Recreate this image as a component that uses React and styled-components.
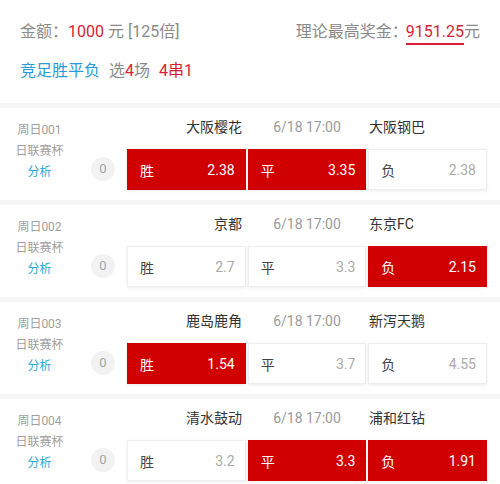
import React from "react";
import styled, { createGlobalStyle } from "styled-components";

const GlobalStyle = createGlobalStyle`
  * { box-sizing: border-box; }
  body {
    margin: 0;
    background: #fff;
    font-family: Roboto, "Noto Sans CJK SC", "Noto Sans", sans-serif;
  }
`;

const matches = [
  { no: "周日001", home: "大阪樱花", away: "大阪钢巴", odds: ["2.38", "3.35", "2.38"], picked: [0, 1] },
  { no: "周日002", home: "京都", away: "东京FC", odds: ["2.7", "3.3", "2.15"], picked: [2] },
  { no: "周日003", home: "鹿岛鹿角", away: "新泻天鹅", odds: ["1.54", "3.7", "4.55"], picked: [0] },
  { no: "周日004", home: "清水鼓动", away: "浦和红钻", odds: ["3.2", "3.3", "1.91"], picked: [1, 2] },
];

const labels = ["胜", "平", "负"];

const App = () => {
  return (
    <>
      <GlobalStyle />
      <Page>
        <Header>
          <HeaderLine>
            <span>
              金额：<Red>1000</Red> 元 [125倍]
            </span>
            <span>
              理论最高奖金：<Prize>9151.25</Prize>元
            </span>
          </HeaderLine>
          <HeaderLine>
            <span>
              <Blue>竞足胜平负</Blue>
              <Gap />选<Red>4</Red>场<Gap />
              <Red>4串1</Red>
            </span>
          </HeaderLine>
        </Header>
        {matches.map((m) => (
          <MatchRow key={m.no}>
            <Info>
              <InfoText>{m.no}</InfoText>
              <InfoText>日联赛杯</InfoText>
              <Analyse>分析</Analyse>
            </Info>
            <Teams>
              <Home>{m.home}</Home>
              <Time>6/18 17:00</Time>
              <Away>{m.away}</Away>
            </Teams>
            <Badge>0</Badge>
            <Options>
              {m.odds.map((o, i) => {
                const on = m.picked.includes(i);
                return (
                  <Option key={i} $on={on}>
                    <span>{labels[i]}</span>
                    <Odds $on={on}>{o}</Odds>
                  </Option>
                );
              })}
            </Options>
          </MatchRow>
        ))}
      </Page>
    </>
  );
};

const Page = styled.div`
  width: 500px;
  height: 484px;
  overflow: hidden;
  background: #fff;
`;

const Header = styled.div`
  padding: 21px 20px 21px 20px;
  display: flex;
  flex-direction: column;
  gap: 17px;
`;

const HeaderLine = styled.div`
  display: flex;
  justify-content: space-between;
  font-size: 16px;
  line-height: 22px;
  color: #8a8a8a;
  white-space: nowrap;
`;

const Red = styled.span`
  color: #d81e36;
`;

const Prize = styled.span`
  color: #d81e36;
  border-bottom: 2px solid #d81e36;
  padding-bottom: 2px;
  margin-left: -2px;
`;

const Blue = styled.span`
  color: #2a9ad6;
`;

const Gap = styled.span`
  display: inline-block;
  width: 9px;
`;

const MatchRow = styled.div`
  display: grid;
  grid-template-columns: 85px 42px 1fr;
  grid-template-rows: 20px 41px;
  row-gap: 12px;
  padding: 9px 13px 10px 0;
  border-top: 5px solid #f6f6f6;
`;

const Info = styled.div`
  grid-column: 1;
  grid-row: 1 / span 2;
  display: flex;
  flex-direction: column;
  align-items: center;
  padding-top: 3px;
  padding-right: 6px;
`;

const InfoText = styled.div`
  font-size: 12px;
  line-height: 21px;
  color: #a0a0a0;
`;

const Analyse = styled(InfoText)`
  color: #2aa6d8;
`;

const Teams = styled.div`
  grid-column: 3;
  grid-row: 1;
  display: grid;
  grid-template-columns: 1fr 1fr 1fr;
  align-items: center;
  font-size: 14px;
  line-height: 20px;
  color: #333;
  white-space: nowrap;
`;

const Home = styled.div`
  text-align: right;
  padding-right: 5px;
`;

const Time = styled.div`
  text-align: center;
  color: #9a9a9a;
`;

const Away = styled.div`
  padding-left: 2px;
`;

const Badge = styled.div`
  grid-column: 2;
  grid-row: 2;
  align-self: center;
  justify-self: center;
  width: 24px;
  height: 24px;
  margin-left: -6px;
  margin-top: -2px;
  border-radius: 50%;
  background: #f2f2f2;
  color: #a5a5a5;
  font-size: 13px;
  display: flex;
  align-items: center;
  justify-content: center;
`;

const Options = styled.div`
  grid-column: 3;
  grid-row: 2;
  display: grid;
  grid-template-columns: 1fr 1fr 1fr;
  gap: 2px;
`;

const Option = styled.div`
  display: flex;
  align-items: center;
  justify-content: space-between;
  padding: 0 10px 0 12px;
  font-size: 14px;
  background: ${(p) => (p.$on ? "#d00000" : "#fff")};
  color: ${(p) => (p.$on ? "#fff" : "#444")};
  border: 1px solid ${(p) => (p.$on ? "#d00000" : "#eeeeee")};
  box-shadow: 0 1px 3px rgba(0, 0, 0, 0.08);
`;

const Odds = styled.span`
  color: ${(p) => (p.$on ? "#fff" : "#aaaaaa")};
`;

export default App;
